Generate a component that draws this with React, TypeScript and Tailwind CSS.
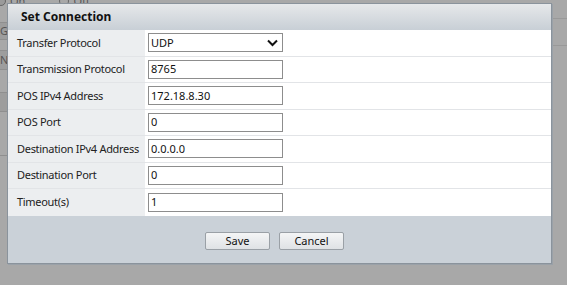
import React from "react"

const rows: { label: string; value: string; select?: boolean }[] = [
  { label: "Transfer Protocol", value: "UDP", select: true },
  { label: "Transmission Protocol", value: "8765" },
  { label: "POS IPv4 Address", value: "172.18.8.30" },
  { label: "POS Port", value: "0" },
  { label: "Destination IPv4 Address", value: "0.0.0.0" },
  { label: "Destination Port", value: "0" },
  { label: "Timeout(s)", value: "1" },
]

const Backdrop = () => {
  return (
    <div className="absolute inset-0 bg-[#a8a8a8] text-[11px] text-[#555]">
      {/* page behind the overlay */}
      <div className="absolute left-[-4px] top-[-7px] flex items-center gap-1">
        <span className="h-[10px] w-[10px] rounded-full border border-[#666] bg-[#9a9a9a]" />
        <span>On</span>
        <span className="ml-[30px] h-[10px] w-[10px] rounded-full border border-[#666]" />
        <span>Off</span>
      </div>
      <div className="absolute left-0 top-[22px] h-[18px] w-[8px] overflow-hidden border-y border-[#8f8f8f] bg-[#9d9d9d] leading-[16px]">Ge</div>
      <div className="absolute left-0 top-[50px] h-[20px] w-[8px] overflow-hidden border-y border-[#8f8f8f] bg-[#9d9d9d] leading-[18px]">Ne</div>
      <div className="absolute left-0 top-[92px] h-[20px] w-[8px] border-y border-[#8f8f8f] bg-[#9d9d9d]" />
      <div className="absolute left-0 top-[155px] w-[8px] border-t border-[#8f8f8f]" />
      <div className="absolute right-0 top-[18px] w-[16px] border-t border-[#999]" />
      <div className="absolute right-0 top-[45px] w-[16px] border-t border-[#999]" />
    </div>
  )
}

const Field = ({ value, select }: { value: string; select?: boolean }) => {
  return (
    <div className="flex h-[19px] w-[135px] items-center justify-between border border-[#8d8d8d] bg-white px-[2px] text-[11px] text-[#111]">
      <span>{value}</span>
      {select && (
        <svg width="11" height="8" viewBox="0 0 11 8" className="mr-[2px]">
          <path d="M1 1.5 L5.5 6 L10 1.5" fill="none" stroke="#111" strokeWidth="2" />
        </svg>
      )}
    </div>
  )
}

const App = () => {
  return (
    <div
      className="relative h-[285px] w-[567px] overflow-hidden"
      style={{ fontFamily: '"Noto Sans", "Open Sans", sans-serif' }}
    >
      <Backdrop />
      <div className="absolute left-[7px] top-[3px] flex h-[261px] w-[545px] flex-col border border-[#8a939c] bg-white shadow-[1px_1px_0_#9aa1a8]">
        <div className="flex h-[26px] items-center bg-gradient-to-b from-[#e6e8ea] to-[#c8cfd6] px-[13px] text-[12px] font-bold text-[#111]">
          Set Connection
        </div>
        <div className="flex flex-col">
          {rows.map((r) => (
            <div key={r.label} className="flex h-[26.5px] border-b border-[#e2e4e7] last:border-b-0">
              <div className="flex w-[137px] items-center whitespace-nowrap bg-[#eceef0] pl-[9px] text-[11px] tracking-[-0.3px] text-[#222]">
                {r.label}
              </div>
              <div className="flex flex-1 items-center pl-[3px]">
                <Field value={r.value} select={r.select} />
              </div>
            </div>
          ))}
        </div>
        <div className="flex flex-1 items-center justify-center gap-[9px] bg-[#cad1d8] pr-[10px] pt-[3px]">
          <button className="h-[18px] w-[65px] rounded-[2px] border border-[#9aa0a6] bg-gradient-to-b from-[#f4f5f6] to-[#dfe2e5] text-[11px] text-[#111]">
            Save
          </button>
          <button className="h-[18px] w-[65px] rounded-[2px] border border-[#9aa0a6] bg-gradient-to-b from-[#f4f5f6] to-[#dfe2e5] text-[11px] text-[#111]">
            Cancel
          </button>
        </div>
      </div>
    </div>
  )
}

export default App
